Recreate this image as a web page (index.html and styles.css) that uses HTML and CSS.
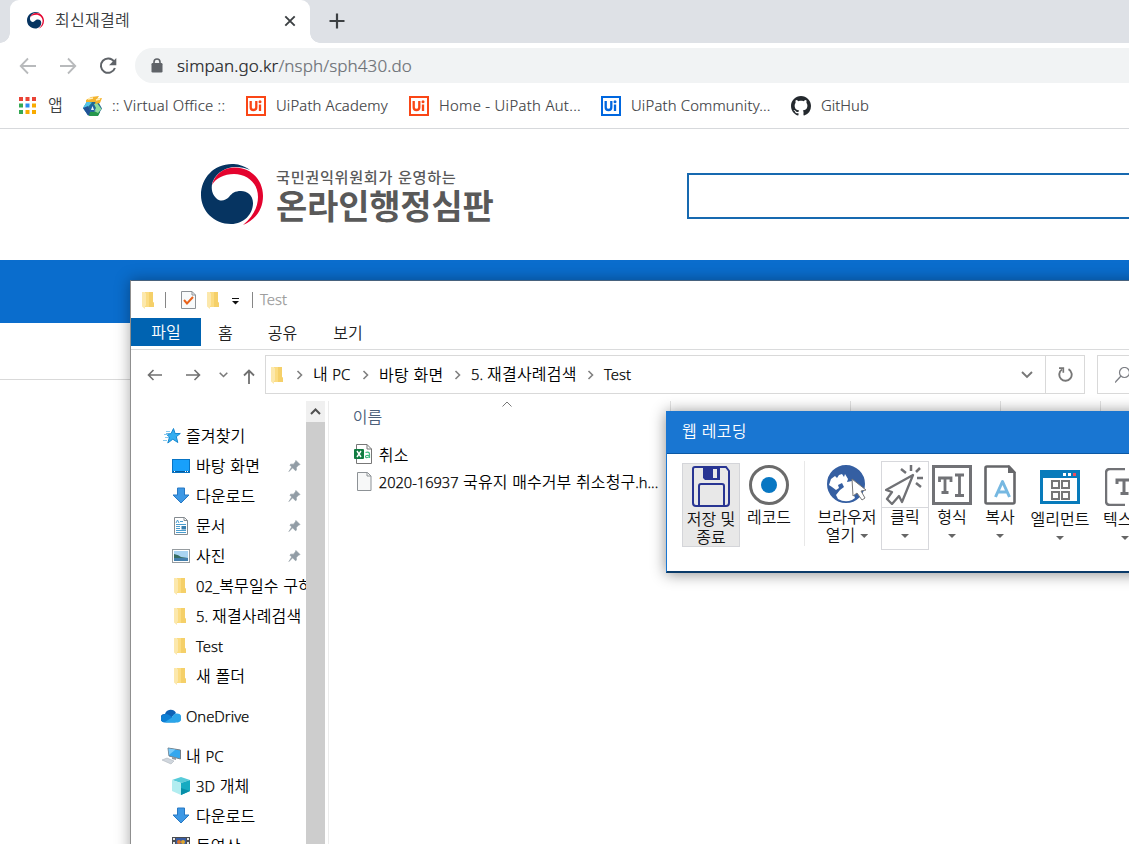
FILE: index.html
```html
<!DOCTYPE html>
<html lang="ko">
<head>
<meta charset="utf-8">
<title>최신재결례</title>
<link rel="stylesheet" href="styles.css">
</head>
<body>
<svg width="0" height="0" class="defs">
  <defs>
    <symbol id="folder" viewBox="0 0 13 18"><path d="M3 1h8v10l1 1v4H3z" fill="#fbdc82"/><path d="M7 1h4v10l1 1v4H7z" fill="#f5d069"/><path d="M0 1h2.500l1.500 1.500v12L3 15v3L0 15.500z" fill="#fce8ac"/></symbol>
    <symbol id="pin" viewBox="0 0 14 14"><path d="M8.500 1 13 5.500 11.500 6 9 8.500 9 11.500 8 12 5 9 1 13 4 8 2 6 3 5 6 5 8 2.500z" fill="#929da6" stroke="#929da6" stroke-width=".7"/></symbol>
    <symbol id="down" viewBox="0 0 18 18"><path d="M5.500 1h7v7H17l-8 8-8-8h4.500z" fill="#3d98e5" stroke="#2878c3"/></symbol>
    <symbol id="ui" viewBox="0 0 20 20"><path d="M0 0h20v20H0z" fill="currentColor"/><path d="M2 2h16v16H2z" fill="#fff"/><path d="M4.700 5v6.200a2.800 2.800 0 0 0 5.600 0V5M14 8.500V15" fill="none" stroke="currentColor" stroke-width="2.300"/><circle cx="14" cy="5.700" r="1.500" fill="currentColor"/></symbol>
    <symbol id="taeguk" viewBox="0 0 62 62"><path d="M49 6C42 1 36 0 31 0 13 0 0 14 0 31 0 47 13 60 30 60 43 60 52 50 52 39 52 31 46 27 40 27 34 27 31 29 28 33 24 37 19 38 15 34 10 29 10 22 12 17 16 8 26 3 34 3 40 3 45 4 49 6Z" fill="#063461"/><path d="M11 21C14 9 24 3.500 34 3.500 50 3.500 62 16 62 32 62 46 54 56 42 61 52 53 57 43 57 33 57 19 46 10 33 10 23 10 15 14 11 21Z" fill="#e4032e"/></symbol>
    <symbol id="chev" viewBox="0 0 7 10"><path d="m1.500 1 4 4-4 4" fill="none" stroke="#808080" stroke-width="1.600"/></symbol>
  </defs>
</svg>

<div class="browser">
  <div class="tabstrip">
    <div class="tab">
      <svg class="fav" width="17" height="17"><use href="#taeguk"/></svg>
      <span class="tab-title">최신재결례</span>
      <svg width="12" height="12" viewBox="0 0 12 12"><path d="m1.300 1.300 9.400 9.400m0-9.400-9.400 9.400" stroke="#3c4043" stroke-width="1.900"/></svg>
    </div>
    <svg class="newtab" width="16" height="16" viewBox="0 0 16 16"><path d="M8 .5v15M.5 8h15" stroke="#3c4043" stroke-width="2.200"/></svg>
  </div>
  <div class="toolbar">
    <svg class="nav-back" width="18" height="18" viewBox="0 0 18 18"><path d="M17 9H2m7-7.500L1.700 9 9 16.500" fill="none" stroke="#b8babc" stroke-width="1.800"/></svg>
    <svg class="nav-fwd" width="18" height="18" viewBox="0 0 18 18"><path d="M1 9h15M9 1.500 16.300 9 9 16.500" fill="none" stroke="#b8babc" stroke-width="1.800"/></svg>
    <svg class="nav-reload" width="18" height="18" viewBox="0 0 18 18"><path d="M15 4.500A7.200 7.200 0 1 0 15.900 11" fill="none" stroke="#5f6368" stroke-width="2"/><path d="M17.300 1v7.200h-7.200z" fill="#5f6368"/></svg>
    <div class="omnibox">
      <svg width="12" height="15" viewBox="0 0 12 15"><path d="M3 6V4a3 3 0 0 1 6 0v2" fill="none" stroke="#5f6368" stroke-width="1.600"/><rect y="5" x=".5" width="11" height="9.500" rx="1.200" fill="#5f6368"/></svg>
      <span class="url"><b>simpan.go.kr</b>/nsph/sph430.do</span>
    </div>
  </div>
  <div class="bookmarks">
    <svg class="apps" width="18" height="18" viewBox="0 0 18 18"><path d="M0 0h4v4H0zM6.500 0h4v4h-4zM13 0h4v4h-4z" fill="#ea4335"/><path d="M6.500 6.500h4v4h-4z" fill="#2d8cf0"/><path d="M13 6.500h4v4h-4zM13 13h4v4h-4zM6.500 13h4v4h-4z" fill="#f9ab00"/><path d="M0 6.500h4v4H0zM0 13h4v4H0z" fill="#34a853"/></svg>
    <span class="bm-apps">앱</span>
    <svg class="bm-vo" width="20" height="20" viewBox="0 0 20 20"><path d="M4 5.500h11l4 7-4 6.500H5L0 12z" fill="#236a91"/><path d="M4 5.500 0 12l5 7 3-3-3-5 4-4.500z" fill="#55c6e6"/><path d="m0 12 5 7.500h10l2-3.500H8l-3-6z" fill="#215397"/><path d="M7 16h10l-2 4H6z" fill="#26974c"/><path d="m14 7 4.500 6-3.500 4-4-2 2-3-2-4z" fill="#8cdd9d"/><path d="m9.500 8 3 6.500h-6z" fill="#1d5fae"/><path d="m9.500 10 1.500 4H8z" fill="#e8f8f6"/><path d="m3 4 5-3 8-1-4 6H3zM13 3l6-1-2 5-5 1z" fill="#f4b32c"/><path d="m5 3 5-1m3 2 4-1" stroke="#fff1bd" stroke-width="1.500"/></svg>
    <span class="bm lat bm1">:: Virtual Office ::</span>
    <svg class="orange" width="20" height="20"><use href="#ui"/></svg><span class="bm lat bm2">UiPath Academy</span>
    <svg class="orange" width="20" height="20"><use href="#ui"/></svg><span class="bm lat bm3">Home - UiPath Aut...</span>
    <svg class="blue" width="20" height="20"><use href="#ui"/></svg><span class="bm lat bm4">UiPath Community...</span>
    <svg width="20" height="20" viewBox="0 0 16 16"><path fill="#24292e" d="M8 0C3.580 0 0 3.580 0 8c0 3.540 2.290 6.530 5.470 7.590.4.070.55-.17.55-.38 0-.19-.01-.82-.01-1.490-2.010.37-2.530-.49-2.690-.94-.09-.23-.48-.94-.82-1.130-.28-.15-.68-.52-.01-.53.63-.01 1.080.58 1.230.82.72 1.210 1.870.87 2.330.66.070-.52.28-.87.51-1.070-1.780-.2-3.640-.89-3.640-3.950 0-.87.31-1.590.82-2.150-.08-.2-.36-1.020.08-2.120 0 0 .67-.21 2.200.82.64-.18 1.320-.27 2-.27s1.360.09 2 .27c1.530-1.040 2.200-.82 2.200-.82.44 1.100.16 1.920.08 2.120.51.56.82 1.270.82 2.150 0 3.070-1.870 3.750-3.650 3.950.29.25.54.73.54 1.480 0 1.070-.01 1.930-.01 2.200 0 .21.15.46.55.38A8.010 8.010 0 0 0 16 8c0-4.420-3.580-8-8-8z"/></svg><span class="bm lat">GitHub</span>
  </div>
</div>

<div class="site">
  <div class="site-head">
    <svg class="emblem" width="62" height="62"><use href="#taeguk"/></svg>
    <div class="brand"><span class="brand-sub">국민권익위원회가 운영하는</span><span class="brand-main">온라인행정심판</span></div>
    <div class="site-search"></div>
  </div>
  <div class="gnb"></div>
  <div class="lnb"></div>
</div>

<div class="explorer">
  <div class="ex-title">
    <svg width="13" height="18"><use href="#folder"/></svg>
    <i class="bar bar1"></i>
    <svg class="check" width="15" height="18" viewBox="0 0 15 18"><path d="M.5.5h10.500l3.500 3.500v13.500H.5z" fill="#f8fafb" stroke="#8d9297"/><path d="M11 .5V4h3.500" fill="none" stroke="#8d9297"/><path d="m3 9 3 3.500L12 6" fill="none" stroke="#e8621b" stroke-width="2"/></svg>
    <svg class="fold2" width="13" height="18"><use href="#folder"/></svg>
    <svg class="qat" width="7" height="7" viewBox="0 0 7 7"><path d="M0 .5h7" stroke="#111"/><path d="M0 3h7L3.500 6.500z" fill="#111"/></svg>
    <i class="bar bar2"></i>
    <span class="lat ex-name">Test</span>
  </div>
  <div class="ex-menu"><span class="file">파일</span><span class="m1">홈</span><span class="m2">공유</span><span>보기</span></div>
  <div class="ex-nav">
    <svg class="n1" width="15" height="12" viewBox="0 0 15 12"><path d="M15 6H1.500M6.500 1l-5 5 5 5" fill="none" stroke="#707070" stroke-width="1.600"/></svg>
    <svg class="n2" width="15" height="12" viewBox="0 0 15 12"><path d="M0 6h13.500M8.500 1l5 5-5 5" fill="none" stroke="#707070" stroke-width="1.600"/></svg>
    <svg class="n3" width="9" height="6" viewBox="0 0 9 6"><path d="m.7.8 3.800 3.700L8.300.8" fill="none" stroke="#7a7a7a" stroke-width="1.600"/></svg>
    <svg class="n4" width="12" height="15" viewBox="0 0 12 15"><path d="M6 15V1.500M1 6.500l5-5 5 5" fill="none" stroke="#707070" stroke-width="1.800"/></svg>
    <div class="address">
      <svg class="a-fold" width="13" height="18"><use href="#folder"/></svg>
      <svg class="c1" width="7" height="10"><use href="#chev"/></svg><span class="crumb w1">내 <span class="lat">PC</span></span>
      <svg class="c2" width="7" height="10"><use href="#chev"/></svg><span class="crumb w2">바탕 화면</span>
      <svg class="c2" width="7" height="10"><use href="#chev"/></svg><span class="crumb w3"><span class="lat">5. </span>재결사례검색</span>
      <svg class="c2" width="7" height="10"><use href="#chev"/></svg><span class="crumb lat last">Test</span>
      <svg class="a-drop" width="12" height="8" viewBox="0 0 12 8"><path d="m1 1 5 5 5-5" fill="none" stroke="#777" stroke-width="1.900"/></svg>
    </div>
    <div class="refresh"><svg width="15" height="15" viewBox="0 0 15 15"><path d="M10.500 2.200A6.200 6.200 0 1 1 4 2.500" fill="none" stroke="#777" stroke-width="1.900"/><path d="M1 1.200h4.300v4.500" fill="none" stroke="#777" stroke-width="1.700"/></svg></div>
    <div class="ex-search"><svg width="15" height="16" viewBox="0 0 15 16"><circle cx="9.500" cy="5.500" r="5" fill="none" stroke="#7c7e84" stroke-width="1.200"/><path d="m6 9-6 6.500" stroke="#7c7e84" stroke-width="1.300"/></svg></div>
  </div>
  <div class="ex-body">
    <div class="tree">
      <div class="row top"><svg width="18" height="16" viewBox="0 0 18 16"><path d="m10.500.5 1.600 5h5.200l-4 3.200 1.500 5.800-5-3.300-5 3.800 1.700-6L3 6l5-.3z" fill="#35aef0" stroke="#1688d0"/><path d="M3 3.500h4M1 6.500h4M2 9.500h4M0 12.500h4" stroke="#85c8ee"/></svg><span>즐겨찾기</span></div>
      <div class="row"><svg width="18" height="14" viewBox="0 0 18 14"><rect x=".5" y=".5" width="17" height="13" fill="#18a0fb" stroke="#0874c4"/><path d="M1 12.500h16" stroke="#075a9c"/><path d="M2 12.500h1m10 0h1m1 0h1" stroke="#fff"/></svg><span>바탕 화면</span><svg class="pin" width="13" height="14"><use href="#pin"/></svg></div>
      <div class="row"><svg width="18" height="18"><use href="#down"/></svg><span>다운로드</span><svg class="pin" width="13" height="14"><use href="#pin"/></svg></div>
      <div class="row"><svg width="18" height="18" viewBox="0 0 18 18"><path d="M2.500.5h10l3 3v14h-13z" fill="#fff" stroke="#858b90"/><path d="M12 .5v3h3.500" fill="none" stroke="#858b90"/><path d="m4 6 1.500-3L7 6M8 4.500h3M4 7.500h10M4 9.500h4M4 11.500h4M4 13.500h10M4 15.500h10" fill="none" stroke="#4b9dce"/><path d="M9.500 9h4.500v3.500H9.500z" fill="#397fae"/></svg><span>문서</span><svg class="pin" width="13" height="14"><use href="#pin"/></svg></div>
      <div class="row"><svg width="18" height="14" viewBox="0 0 18 14"><rect x=".5" y=".5" width="17" height="13" fill="#fff" stroke="#969ca0"/><path d="M2 2h14v10H2z" fill="#a9d4f2"/><path d="M2 5q5 1 7 3l7 1v1H2z" fill="#376d62"/><path d="M2 9h14v3H2z" fill="#437fad"/></svg><span>사진</span><svg class="pin" width="13" height="14"><use href="#pin"/></svg></div>
      <div class="row"><svg class="tf" width="13" height="18"><use href="#folder"/></svg><span class="mix"><span class="lat">02_</span>복무일수 구하기</span></div>
      <div class="row"><svg class="tf" width="13" height="18"><use href="#folder"/></svg><span class="mix"><span class="lat">5. </span>재결사례검색</span></div>
      <div class="row"><svg class="tf" width="13" height="18"><use href="#folder"/></svg><span class="lat solo">Test</span></div>
      <div class="row"><svg class="tf" width="13" height="18"><use href="#folder"/></svg><span>새 폴더</span></div>
      <div class="row top gap"><svg class="cloud" width="20" height="14" viewBox="0 0 20 14"><path d="M3 13a4 4 0 0 1 1-8 6 6 0 0 1 11-1l-5 5z" fill="#0c61b5"/><path d="M3 13.500A4 4 0 0 1 2 6q3-2 6 0l9 6-3 1.500z" fill="#0c7fd4"/><path d="m4 13 7-4.500Q12 5 15 4.500a4.600 4.600 0 0 1 2 9H5z" fill="#2ba5e9"/></svg><span class="lat solo">OneDrive</span></div>
      <div class="row top gap"><svg class="cloud" width="20" height="18" viewBox="0 0 20 18"><path d="m7 1 12.500 2v9L8 9z" fill="#35a7ee" stroke="#75818b"/><path d="m7.500 1.500 7 1L8 8z" fill="#7acbfa"/><path d="m11 10 4 1v2l-4-1z" fill="#9199a2"/><path d="m1 13 5-2 7 3-3 3z" fill="#d0d6dd" stroke="#aeb5bd" stroke-width=".6"/></svg><span class="mix">내 <span class="lat">PC</span></span></div>
      <div class="row"><svg width="18" height="18" viewBox="0 0 18 18"><path d="m0 3 9-3 9 3-9 3z" fill="#57cbd9"/><path d="M0 3l9 3v12l-9-4z" fill="#b2edf0"/><path d="m18 3-9 3v12l9-4z" fill="#16abc1"/><path d="m9 11 9 3-9 4z" fill="#078fa9"/></svg><span class="mix"><span class="lat">3D</span> 개체</span></div>
      <div class="row"><svg width="18" height="18"><use href="#down"/></svg><span>다운로드</span></div>
      <div class="row"><svg width="18" height="20" viewBox="0 0 18 20"><path d="M0 1h18v18H0z" fill="#4b4d50"/><path d="M4 2h10v8H4z" fill="#385ca4"/><circle cx="7" cy="6" r="2" fill="#db742b"/><circle cx="11" cy="6" r="2" fill="#dfa72b"/><path d="M4 8h10v2H4z" fill="#37853f"/><path d="M2 2v16M16 2v16" stroke="#e6e7e8" stroke-width="2" stroke-dasharray="2 2"/></svg><span>동영상</span></div>
    </div>
    <div class="scroll"><div class="scroll-up"><svg width="11" height="7" viewBox="0 0 11 7"><path d="m1 6 4.500-4.500L10 6" fill="none" stroke="#505050" stroke-width="2"/></svg></div></div>
    <div class="files">
      <div class="cols">
        <div class="col first"><span>이름</span><svg width="10" height="6" viewBox="0 0 10 6"><path d="M.5 5.500 5 1l4.500 4.500" fill="none" stroke="#777"/></svg></div>
        <div class="col wide">수정한 날짜</div><div class="col mid">유형</div><div class="col small">크기</div>
      </div>
      <div class="frow"><svg width="18" height="20" viewBox="0 0 18 20"><path d="M2.500.5H13l4.500 4.500v14.500h-15z" fill="#fff" stroke="#777"/><path d="M13 .5V5h4.500" fill="none" stroke="#777"/><rect y="5" width="10" height="10" rx="1" fill="#107c41"/><path d="m3 7 4 6m0-6-4 6" stroke="#fff" stroke-width="1.400"/><path d="M11.500 8.500q4-1 4 1.500v4m0-2.500q-4-.5-4 1t2 1 2-1.500" fill="none" stroke="#42bb82" stroke-width="1.200"/></svg><span>취소</span></div>
      <div class="frow second"><svg width="18" height="19" viewBox="0 0 18 19"><path d="M3.500.5h10l3.500 3.500v14.500H3.500z" fill="#f7f8f8" stroke="#8d9296"/><path d="M13 .5V4h4" fill="none" stroke="#8d9296"/></svg><span><span class="lat num">2020-16937</span> 국유지 매수거부 취소청구<span class="lat num">.h...</span></span></div>
    </div>
  </div>
</div>

<div class="recorder">
  <div class="rec-title">웹 레코딩</div>
  <div class="tools">
    <div class="tool save"><svg width="38" height="41" viewBox="0 0 38 41"><path d="M3 1h31l3 4v32q0 3-3 3H4q-3 0-3-3V3q0-2 2-2z" fill="#e8e8e8" stroke="#283593" stroke-width="2"/><path d="M11 1h17v13H13l-2-2z" fill="#283593"/><path d="M22 3h3v9h-4V3z" fill="#e8e8e8"/><path d="M7 39V20q0-2 2-2h21q2 0 2 2v19" fill="none" stroke="#283593" stroke-width="2"/></svg><span>저장 및<br>종료</span></div>
    <div class="tool record"><svg width="40" height="40" viewBox="0 0 40 40"><circle cx="20" cy="20" r="18.500" fill="#fff" stroke="#6b6b6b" stroke-width="3"/><circle cx="20" cy="20" r="8" fill="#0877c3"/></svg><span>레코드</span></div>
    <i class="sep"></i>
    <div class="tool open"><svg width="40" height="39" viewBox="0 0 40 39"><circle cx="19" cy="19" r="18" fill="#355fa2" stroke="#355fa2" stroke-width="2"/><path d="M2 20 4 14 8 11 10 13 12 10 15 9 17 12 18 9 21 14 20 17 25 16 28 20 26 23 26 28 28 33 25 35Q18 38 11 34L9 30 13 25 17 22 15 18 11 20 12 23 9 25 5 22z" fill="#fff"/><path d="m25 14 1 17 4-3 5 7 3-2-4-7 5-1z" fill="#fff" stroke="#777" stroke-width="1"/></svg><span>브라우저<br>열기<i class="tri inline"></i></span></div>
    <div class="tool click"><div class="click-icon"><svg width="40" height="40" viewBox="0 0 40 40"><path d="M28 10 1 25l6 2-5 7 5 5 7-8 3 6z" fill="#fff" stroke="#707175" stroke-width="2.300" stroke-linejoin="round"/><path d="M26 0v6M16 4l5 4M35 3l-4 4M32 13h6M31 18l5 4" stroke="#707175" stroke-width="2.500"/></svg></div><span>클릭</span><i class="tri"></i></div>
    <div class="tool type"><svg width="40" height="40" viewBox="0 0 40 40"><path d="M1.500 1.500h37v37h-37z" fill="#fff" stroke="#717276" stroke-width="3"/><path d="M7.500 17v-4H19v4M13 13v15M9.500 27.500h7M23 10h9M27.500 10v20M23 30.500h9" fill="none" stroke="#717276" stroke-width="2.800"/></svg><span>형식</span><i class="tri"></i></div>
    <div class="tool copy"><svg width="32" height="40" viewBox="0 0 32 40"><path d="M3 1.500h22l5.500 6V37q0 1.500-1.500 1.500H3Q1.500 38.500 1.500 37V3Q1.500 1.500 3 1.500z" fill="#fff" stroke="#66676a" stroke-width="2.600"/><path d="M24 0v8h8z" fill="#66676a"/><path d="M11.500 32 18.500 16.500 25.500 32M13.500 27h10" fill="none" stroke="#76b8e1" stroke-width="3" stroke-linejoin="round"/></svg><span>복사</span><i class="tri"></i></div>
    <div class="tool elem"><svg width="40" height="34" viewBox="0 0 40 34"><rect x="1.500" y="1.500" width="37" height="31" fill="#fff" stroke="#087bbb" stroke-width="3"/><path d="M0 0h40v8H0z" fill="#087bbb"/><path d="M23 3h3v3h-3zM28 3h3v3h-3z" fill="#fff"/><path d="M33 3h3v3h-3z" fill="#ed4e5d"/><path d="M12 11h7v7h-7zM22 11h7v7h-7zM12 22h7v7h-7zM22 22h7v7h-7z" fill="none" stroke="#777" stroke-width="2"/></svg><span>엘리먼트</span><i class="tri"></i></div>
    <div class="tool text"><svg width="40" height="38" viewBox="0 0 40 38"><path d="M20 1H5Q1 1 1 5v28q0 4 4 4h15" fill="none" stroke="#717276" stroke-width="2.500"/><path d="M12 16v-4h14v4M19 12v13M15.500 25.500h8" fill="none" stroke="#717276" stroke-width="3"/></svg><span>텍스트</span><i class="tri"></i></div>
  </div>
</div>
</body>
</html>
```
FILE: styles.css
```css
* { box-sizing: border-box; }
html, body { margin: 0; height: 844px; overflow: hidden; }
body { position: relative; width: 1129px; background: #fff; color: #000; font: 350 16px/20px "Noto Sans CJK KR", sans-serif; white-space: nowrap; }
svg { display: block; flex: none; }
i { font-style: normal; }
span { flex: none; }
.defs { position: absolute; }
.lat { font: 300 14.800px/20px "Noto Sans", "Noto Sans CJK KR", sans-serif; letter-spacing: .05px; -webkit-text-stroke: .25px currentColor; }

/* browser chrome */
.tabstrip { display: flex; height: 43px; background: #dee1e6; padding-left: 10px; }
.tab { position: relative; display: flex; align-items: center; width: 300px; height: 43px; padding: 0 14px 2px 17px; background: #fff; border-radius: 9px 9px 0 0; }
.tab::before, .tab::after { content: ""; position: absolute; bottom: 0; width: 10px; height: 10px; }
.tab::before { left: -10px; background: radial-gradient(circle at 0 0, transparent 9.500px, #fff 10px); }
.tab::after { right: -10px; background: radial-gradient(circle at 100% 0, transparent 9.500px, #fff 10px); }
.tab-title { flex: 1; margin-left: 11px; padding-bottom: 3px; color: #3c4043; letter-spacing: .3px; }
.newtab { margin: 13px 0 0 19px; }
.toolbar { display: flex; align-items: center; height: 45px; }
.nav-back { margin-left: 19px; }
.nav-fwd { margin-left: 22px; }
.nav-reload { margin-left: 22px; }
.omnibox { display: flex; align-items: center; flex: 1; height: 35px; margin-left: 18px; padding-left: 16px; background: #f1f3f4; border-radius: 18px 0 0 18px; }
.url { margin-left: 14px; color: #6b6f74; font: 300 17px/20px "Noto Sans", sans-serif; letter-spacing: .1px; -webkit-text-stroke: .2px currentColor; }
.url b { font-weight: 300; color: #202124; }
.bookmarks { display: flex; align-items: center; height: 41px; padding: 0 0 5px 19px; border-bottom: 1px solid #d7d9dc; color: #3c4043; }
.bm-apps { margin: 0 20px 0 11px; padding-bottom: 3px; width: 15px; }
.bm { margin-left: 10px; padding-bottom: 2px; -webkit-text-stroke-width: .15px; }
.bm1 { margin-left: 9px; width: 134px; letter-spacing: .25px; }
.bm2 { width: 133px; letter-spacing: .15px; }
.bm3 { width: 162px; letter-spacing: .33px; }
.bm4 { width: 160px; letter-spacing: .18px; }
.orange { color: #fa4616; }
.blue { color: #0067df; }

/* web page */
.site-head { display: flex; height: 131px; }
.emblem { margin: 35px 0 0 201px; }
.brand { display: flex; flex-direction: column; flex: none; width: 424px; padding: 37px 0 0 13px; color: #595959; font-weight: 700; }
.brand-sub { font-size: 15.200px; font-weight: 500; line-height: 20px; letter-spacing: .66px; }
.brand-main { font-size: 34px; line-height: 38px; letter-spacing: -.2px; }
.site-search { width: 460px; height: 46px; margin-top: 44px; border: 2px solid #1769b0; flex: none; }
.gnb { height: 63px; background: #0a6dcd; }
.lnb { height: 57px; border-bottom: 1px solid #d9d9d9; }

/* file explorer window */
.explorer { position: absolute; left: 130px; top: 280px; width: 1012px; height: 580px; background: #fff; border: 1px solid #48627d; border-left-color: #8f8f8f; box-shadow: 0 0 14px rgba(0,0,0,.35); }
.ex-title { display: flex; align-items: center; height: 37px; padding-left: 11px; }
.bar { width: 1px; height: 16px; background: #868686; }
.bar1 { margin-left: 10px; }
.check { margin-left: 15px; }
.fold2 { margin-left: 11px; }
.qat { margin: 3px 0 0 12px; }
.bar2 { margin-left: 13px; }
.ex-name { margin-left: 7px; padding-bottom: 2px; color: #999; }
.ex-menu { display: flex; align-items: center; height: 32px; padding-bottom: 3px; border-bottom: 1px solid #dadbdc; color: #222; }
.file { width: 70px; height: 28px; background: #0063b1; color: #fff; text-align: center; line-height: 26px; }
.m1 { margin: 0 35px 0 17px; }
.m2 { margin-right: 36px; }
.ex-nav { display: flex; align-items: center; height: 51px; padding-bottom: 2px; }
.n1 { margin-left: 16px; }
.n2 { margin-left: 24px; }
.n3 { margin-left: 18px; }
.n4 { margin: 3px 10px 0 15px; }
.address { display: flex; align-items: center; flex: none; width: 781px; height: 39px; border: 1px solid #d9d9d9; }
.a-fold { margin-left: 5px; }
.c1 { margin-left: 12px; }
.c2 { margin-left: 10px; }
.crumb { margin-left: 10px; padding-bottom: 2px; }
.w1 { width: 39px; }
.w2 { width: 65px; letter-spacing: .2px; }
.w3 { width: 106px; letter-spacing: .2px; }
.a-drop { margin-left: auto; margin-right: 12px; }
.refresh { display: grid; place-items: center; flex: none; width: 39px; height: 39px; border: 1px solid #d9d9d9; border-left: 0; }
.ex-search { display: flex; align-items: center; flex: none; width: 60px; height: 39px; margin-left: 12px; padding-left: 17px; border: 1px solid #d9d9d9; }
.ex-body { display: flex; height: 450px; }
.tree { width: 175px; padding-top: 20px; overflow: hidden; }
.row { display: flex; align-items: center; height: 30px; padding-left: 41px; gap: 6px; }
.row > span { padding-bottom: 2px; letter-spacing: .15px; }
.row > .solo { padding: 0 0 1px; letter-spacing: 0; }
.row.top { padding-left: 32px; gap: 5px; }
.gap { margin-top: 10px; }
.tf { margin: 0 3px 0 2px; }
.row .cloud { margin: 0 0 0 -2px; }
.pin { margin-left: auto; margin-right: 5px; }
.scroll { width: 23px; border-right: 1px solid #ececec; background: linear-gradient(to right, #cdcdcd 19px, #fff 19px); }
.scroll-up { display: grid; place-items: center; width: 19px; height: 21px; background: #f0f0f0; }
.files { width: 813px; }
.cols { display: flex; color: #4c607a; height: 38px; }
.col { flex: none; height: 30px; border-left: 1px solid #e2e2e2; padding: 7px 0 0 25px; }
.col.first { display: flex; justify-content: space-between; width: 341px; border-left: 0; padding: 5px 158px 0 24px; }
.first svg { margin-top: -5px; }
.wide { width: 180px; padding-left: 29px; }
.mid { width: 150px; padding-left: 23px; }
.small { width: 100px; }
.cols::after { content: ""; width: 1px; height: 30px; background: #e2e2e2; }
.frow { display: flex; align-items: center; height: 30px; padding-left: 25px; gap: 7px; letter-spacing: .1px; }
.frow.second { height: 26px; }
.second svg { margin-top: -2px; }
.second > span { padding-bottom: 2px; }
.num { font-size: 14.600px; letter-spacing: 0; }

/* web recorder window */
.recorder { position: absolute; left: 666px; top: 411px; width: 480px; height: 162px; border: 1px solid #1976d2; border-bottom: 2px solid #0b3b69; background: #fff; box-shadow: 0 1px 14px rgba(0,0,0,.45); color: #111; }
.rec-title { height: 42px; padding: 8px 0 0 15px; background: #1976d2; border-bottom: 1px solid #0c58a3; color: #fff; letter-spacing: .25px; }
.tools { display: flex; padding: 7px 0 0 15px; }
.tool { display: flex; flex-direction: column; align-items: center; text-align: center; line-height: 18px; flex: none; }
.tool svg { margin: 4px 0 2px; }
.save { width: 58px; height: 84px; margin-top: 2px; background: #e8e8e8; border: 1px solid #d4d5d9; }
.tool.save svg { margin: 2px 0; }
.record { width: 58px; }
.sep { flex: none; width: 1px; height: 85px; margin: 0 8px 0 6px; background: #e8e8e8; }
.open { width: 68px; }
.tool.open svg { margin: 4px 0 3px; }
.click { width: 48px; height: 89px; border: 1px solid #d7d8dc; }
.click-icon { height: 46px; border-bottom: 1px solid #d7d8dc; width: 100%; display: grid; place-items: center; }
.tool.click svg { margin: 0; }
.click span { margin-top: -1px; }
.type { width: 46px; }
.copy { width: 50px; }
.elem { width: 70px; }
.tool.elem svg { margin: 9px 0 5px; }
.text { width: 60px; }
.tool.text svg { margin: 7px 0 3px; }
.tri { width: 8px; height: 4px; margin-top: 9px; background: #666; clip-path: polygon(0 0, 100% 0, 50% 100%); }
.tri.inline { display: inline-block; margin: 0 0 3px 5px; }
```
